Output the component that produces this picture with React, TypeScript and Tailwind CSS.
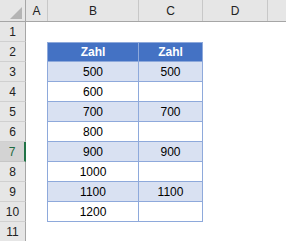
// Excel-style sheet with a banded "Zahl" table in B2:C10
const cols = ['A', 'B', 'C', 'D'];

const rows: { b: string; c: string }[] = [
  { b: '500', c: '500' },
  { b: '600', c: '' },
  { b: '700', c: '700' },
  { b: '800', c: '' },
  { b: '900', c: '900' },
  { b: '1000', c: '' },
  { b: '1100', c: '1100' },
  { b: '1200', c: '' },
];

const bodyGrid = 'grid grid-cols-[26px_21px_92px_64px_65px_1fr] h-5';

function RowHead({ n, active }: { n: number; active?: boolean }) {
  return (
    <div
      className={`flex items-center justify-center border-b ${
        active
          ? 'bg-[#d3d3d3] text-[#1e6b41] border-b-[#c6c6c6] border-r-2 border-r-[#217346]'
          : 'bg-[#e6e6e6] text-[#222] border-b-[#d0d0d0] border-r border-r-[#a6a6a6]'
      }`}
    >
      {n}
    </div>
  );
}

export default function App() {
  return (
    <div className="w-[286px] h-[241px] overflow-hidden bg-white text-[12px] leading-none font-['Liberation_Sans',Arial,sans-serif] text-black select-none">
      {/* Column headers */}
      <div className="grid grid-cols-[26px_22px_91px_64px_65px_1fr] h-[22px] bg-[#e6e6e6] border-b border-[#a6a6a6] text-[#222]">
        <div className="relative border-r border-[#a6a6a6]">
          <svg className="absolute left-0 top-0" width="25" height="21" viewBox="0 0 25 21">
            <polygon points="22,7 22,19 10,19" fill="#b4b4b4" />
          </svg>
        </div>
        {cols.map((c) => (
          <div key={c} className="flex items-center justify-center border-r border-[#c8c8c8]">
            {c}
          </div>
        ))}
        <div />
      </div>

      {/* Row 1 */}
      <div className={bodyGrid}>
        <RowHead n={1} />
      </div>

      {/* Row 2: table header */}
      <div className={bodyGrid}>
        <RowHead n={2} />
        <div />
        <div className="flex items-center justify-center bg-[#4472c4] text-white font-bold border-t border-l border-r border-b border-[#8ea9db]">
          Zahl
        </div>
        <div className="flex items-center justify-center bg-[#4472c4] text-white font-bold border-t border-r border-b border-[#8ea9db]">
          Zahl
        </div>
      </div>

      {/* Rows 3-10: data */}
      {rows.map((r, i) => {
        const band = i % 2 === 0 ? 'bg-[#d9e1f2]' : 'bg-white';
        return (
          <div key={i} className={bodyGrid}>
            <RowHead n={i + 3} active={i + 3 === 7} />
            <div />
            <div className={`flex items-center justify-center border-l border-r border-b border-[#8ea9db] ${band}`}>
              {r.b}
            </div>
            <div className={`flex items-center justify-center border-r border-b border-[#8ea9db] ${band}`}>
              {r.c}
            </div>
          </div>
        );
      })}

      {/* Row 11 */}
      <div className={bodyGrid}>
        <RowHead n={11} />
      </div>
    </div>
  );
}
